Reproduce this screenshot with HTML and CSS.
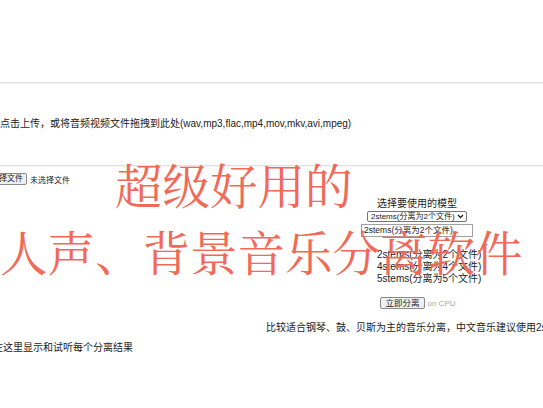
FILE: index.html
```html
<!DOCTYPE html>
<html lang="zh">
<head>
  <meta charset="UTF-8">
  <meta name="viewport" content="width=device-width, initial-scale=1.0">
  <link rel="stylesheet" href="styles.css">
  <title>人声分离</title>
</head>
<body>
  <div class="page">
    <div class="header-space"></div>
    <div class="rule"></div>

    <div class="upload">点击上传，或将音频视频文件拖拽到此处(wav,mp3,flac,mp4,mov,mkv,avi,mpeg)</div>

    <div class="rule"></div>

    <div class="panels">
      <div class="left">
        <div class="file-row">
          <span class="file-btn">选择文件</span>
          <span class="file-name">未选择文件</span>
        </div>
      </div>

      <div class="right">
        <div class="label">选择要使用的模型</div>
        <div class="model-select">
          <span>2stems(分离为2个文件)</span>
          <svg class="chevron" width="7" height="5" viewBox="0 0 7 5">
            <path d="M1 1 L3.5 3.5 L6 1" fill="none" stroke="#222" stroke-width="1.3"/>
          </svg>
        </div>
        <div class="combo">2stems(分离为2个文件)</div>
        <ul class="options">
          <li>2stems(分离为2个文件)</li>
          <li>4stems(分离为4个文件)</li>
          <li>5stems(分离为5个文件)</li>
        </ul>
        <div class="run-row">
          <button class="run-btn">立即分离</button>
          <span class="device">on CPU</span>
        </div>
        <div class="hint">比较适合钢琴、鼓、贝斯为主的音乐分离，中文音乐建议使用2stems</div>
      </div>
    </div>

    <div class="result-note">在这里显示和试听每个分离结果</div>

    <!-- big title laid over the page -->
    <div class="banner">
      <div class="banner-line first">超级好用的</div>
      <div class="banner-line">人声、背景音乐分离软件</div>
    </div>
  </div>
</body>
</html>
```

FILE: styles.css
```css
body {
  margin: 0;
  overflow: hidden;
  background: #fff;
  color: #222;
  font-family: "Liberation Sans", "Noto Sans CJK SC", sans-serif;
  font-size: 10px;
}

.page {
  position: relative;
  width: 543px;
  height: 408px;
  overflow: hidden;
}

.header-space {
  height: 82px;
}

.rule {
  height: 1px;
  background: #e2e2e2;
  box-shadow: 0 1px 1px rgba(0, 0, 0, 0.05);
}

.upload {
  margin-top: 34px;
  height: 14px;
  line-height: 14px;
  white-space: nowrap;
}

.upload + .rule {
  margin-top: 34px;
}

.panels {
  display: flex;
}

.left {
  width: 267px;
  flex-shrink: 0;
}

.file-row {
  display: flex;
  align-items: center;
  gap: 3px;
  margin-top: 7px;
  margin-left: -13px;
  font-size: 8px;
}

.file-btn {
  border: 1px solid #8a8a8a;
  border-radius: 2px;
  background: #efefef;
  padding: 0 3px;
  height: 10px;
  line-height: 10px;
}

.right {
  width: 300px;
  flex-shrink: 0;
  display: flex;
  flex-direction: column;
  align-items: center;
  text-align: center;
  padding-top: 31px;
}

.label {
  height: 14px;
  line-height: 14px;
}

.model-select {
  display: flex;
  align-items: center;
  justify-content: space-between;
  width: 100px;
  height: 11px;
  box-sizing: border-box;
  padding: 0 2px 0 3px;
  font-size: 8px;
  line-height: 9px;
  border: 1px solid #767676;
  border-radius: 2px;
  background: #fff;
  white-space: nowrap;
}

.combo {
  margin-top: 2px;
  width: 108px;
  height: 11px;
  line-height: 11px;
  border: 1px solid #a0a0a0;
  text-align: left;
  font-size: 8.5px;
  padding-left: 2px;
  box-sizing: content-box;
  white-space: nowrap;
}

.options {
  list-style: none;
  margin: 12px 0 0 110px;
  padding: 0;
  align-self: flex-start;
  text-align: left;
  line-height: 12px;
}

.run-row {
  display: flex;
  align-items: center;
  gap: 3px;
  margin-top: 12px;
  margin-left: 2px;
}

.run-btn {
  font-family: inherit;
  font-size: 8.5px;
  height: 12px;
  padding: 0 4px;
  line-height: 10px;
  border: 1px solid #8a8a8a;
  border-radius: 2px;
  background: #efefef;
  color: #222;
}

.device {
  font-size: 8px;
  color: #a8a8a8;
}

.hint {
  margin-top: 12px;
  white-space: nowrap;
  line-height: 14px;
}

.result-note {
  margin-top: 6px;
  margin-left: -7px;
  line-height: 14px;
  white-space: nowrap;
}

.banner {
  position: absolute;
  left: 0;
  top: 150px;
  color: #f16a57;
  font-family: "Noto Serif CJK SC", "Noto Sans CJK SC", serif;
  font-size: 47.5px;
  line-height: 67px;
  white-space: nowrap;
}

.banner-line.first {
  padding-left: 115px;
}
```
